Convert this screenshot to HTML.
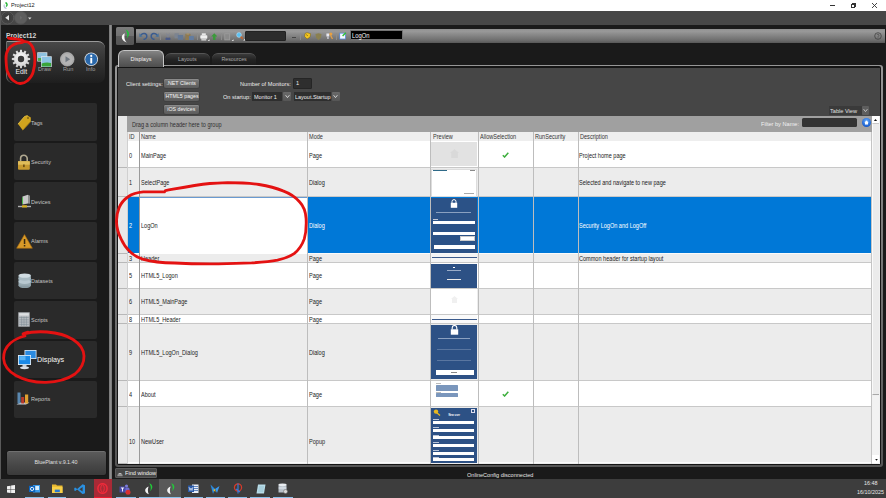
<!DOCTYPE html>
<html><head><meta charset="utf-8"><style>
*{box-sizing:border-box;margin:0;padding:0}
html,body{width:886px;height:498px;overflow:hidden;background:#1a1a1a;font-family:"Liberation Sans",sans-serif;position:relative}
.a{position:absolute}
.t{position:absolute;white-space:nowrap;line-height:1}
.gt{position:absolute;white-space:nowrap;font-size:6.4px;color:#1c1c1c;line-height:1;transform:scaleX(0.87);transform-origin:0 0}
</style></head><body>
<div class="a" style="left:0;top:0;width:886px;height:11px;background:#fff"></div>
<div class="a" style="left:0;top:0;width:1px;height:498px;background:#5a5a5a"></div>
<svg class="a" style="left:3px;top:2px" width="6" height="7" viewBox="0 0 6 7"><path d="M2.5 0.5 C4.5 1.5 4.5 3.5 3 4.5" stroke="#1fb030" stroke-width="1.4" fill="none"/><path d="M1.5 2.5 C0.5 4 1.5 6 3.5 6.5" stroke="#b9c0d8" stroke-width="1.2" fill="none"/></svg>
<div class="t" style="left:11px;top:1.93px;font-size:6.16px;color:#1a1a1a;transform:scaleX(0.91);transform-origin:0 0">Project12</div>
<div class="a" style="left:830px;top:5px;width:5px;height:1px;background:#333"></div>
<div class="a" style="left:852px;top:2.8px;width:4px;height:4px;border:0.8px solid #333"></div><div class="a" style="left:850.6px;top:4px;width:4.2px;height:4.2px;border:0.9px solid #333;background:#fff"></div>
<svg class="a" style="left:871px;top:2px" width="7" height="7" viewBox="0 0 7 7"><path d="M1 1L6 6M6 1L1 6" stroke="#333" stroke-width="0.9"/></svg>
<div class="a" style="left:1px;top:11px;width:885px;height:14px;background:#474747"></div>
<svg class="a" style="left:0;top:11px" width="30" height="14" viewBox="0 0 30 14"><circle cx="7.5" cy="6.8" r="6.2" fill="#3e3e3e" stroke="#5c5c5c" stroke-width="0.9"/><circle cx="20.8" cy="6.8" r="6.2" fill="#5e5e5e" stroke="#585858" stroke-width="0.9"/><circle cx="7.5" cy="6.8" r="4.6" fill="none" stroke="#4a4a4a" stroke-width="0.6"/><path d="M9 4L5.2 6.8L9 9.6Z" fill="#e4e4e4"/><path d="M20 4.8L22.4 6.8L20 8.8Z" fill="#6a6a6a"/></svg>
<svg class="a" style="left:28px;top:16.5px" width="4" height="3"><path d="M0 0.5L3.5 0.5L1.75 2.5Z" fill="#ddd"/></svg>
<div class="t" style="left:5.9px;top:32.5px;font-size:6.75px;font-weight:bold;color:#d4d4d4">Project12</div>
<div class="a" style="left:6px;top:41.2px;width:98.5px;height:42px;border-radius:1px 7px 7px 7px;background:linear-gradient(#484848,#333 45%,#262626 80%,#1e1e1e);border-top:1px solid #9a9a9a;border-left:0.8px solid #6a6a6a"></div>
<svg class="a" style="left:10.8px;top:48.6px" width="20" height="20" viewBox="0 0 20 20"><defs><radialGradient id="gg" cx="50%" cy="40%" r="60%"><stop offset="0" stop-color="#ffffff"/><stop offset="1" stop-color="#c8c8c8"/></radialGradient></defs><path d="M16.90 8.83L19.15 9.08L19.15 10.92L16.90 11.17L16.56 12.44L18.39 13.78L17.47 15.38L15.39 14.46L14.46 15.39L15.38 17.47L13.78 18.39L12.44 16.56L11.17 16.90L10.92 19.15L9.08 19.15L8.83 16.90L7.56 16.56L6.22 18.39L4.62 17.47L5.54 15.39L4.61 14.46L2.53 15.38L1.61 13.78L3.44 12.44L3.10 11.17L0.85 10.92L0.85 9.08L3.10 8.83L3.44 7.56L1.61 6.22L2.53 4.62L4.61 5.54L5.54 4.61L4.62 2.53L6.22 1.61L7.56 3.44L8.83 3.10L9.08 0.85L10.92 0.85L11.17 3.10L12.44 3.44L13.78 1.61L15.38 2.53L14.46 4.61L15.39 5.54L17.47 4.62L18.39 6.22L16.56 7.56Z" fill="url(#gg)"/><circle cx="10" cy="10" r="3.2" fill="#3a3a3a"/></svg>
<div class="t" style="left:15.4px;top:68.5px;font-size:6.8px;color:#f0f0f0">Edit</div>
<svg class="a" style="left:37px;top:51.5px" width="15" height="15.5" viewBox="0 0 15 15.5"><rect x="0.3" y="0.3" width="10" height="9.2" fill="#e8eef2"/><rect x="0.9" y="0.9" width="8.8" height="8" fill="#8ec2e0"/><rect x="0.9" y="6" width="8.8" height="2.9" fill="#4aa848"/><rect x="4.1" y="4.3" width="10.6" height="10.9" fill="#e8eef2"/><rect x="4.7" y="4.9" width="9.4" height="9.7" fill="#8cc4e4"/><path d="M4.7 11.5Q9 10 14.1 11V14.6H4.7Z" fill="#3aa63a"/></svg>
<div class="t" style="left:37.7px;top:65.63px;font-size:6.16px;color:#a0a0a0;transform:scaleX(0.91);transform-origin:0 0">Draw</div>
<svg class="a" style="left:60px;top:52px" width="14.5" height="14.5" viewBox="0 0 14.5 14.5"><circle cx="7.25" cy="7.25" r="6.8" fill="#a8a8a8" stroke="#c8c8c8" stroke-width="0.6"/><circle cx="7.25" cy="7.25" r="5.6" fill="#b4b4b4"/><path d="M5.5 4.2L10.2 7.25L5.5 10.3Z" fill="#707880"/></svg>
<div class="t" style="left:62.6px;top:65.63px;font-size:6.16px;color:#a0a0a0;transform:scaleX(0.91);transform-origin:0 0">Run</div>
<svg class="a" style="left:83.5px;top:52px" width="14.5" height="14.5" viewBox="0 0 14.5 14.5"><circle cx="7.25" cy="7.25" r="6.8" fill="#e0e4e8"/><circle cx="7.25" cy="7.25" r="6" fill="#2a68aa"/><circle cx="7.25" cy="3.9" r="1.1" fill="#fff"/><rect x="6.3" y="5.8" width="1.9" height="5.6" fill="#fff"/></svg>
<div class="t" style="left:85.7px;top:65.63px;font-size:6.16px;color:#a0a0a0;transform:scaleX(0.91);transform-origin:0 0">Info</div>
<div class="a" style="left:14px;top:103.00px;width:83.1px;height:37.6px;border-radius:2px;background:#2a2a2a"></div>
<div class="t" style="left:31.3px;top:119.70px;font-size:6.05px;color:#c4c4c4;transform:scaleX(0.91);transform-origin:0 0">Tags</div>
<div class="a" style="left:14px;top:142.65px;width:83.1px;height:37.6px;border-radius:2px;background:#2a2a2a"></div>
<div class="t" style="left:31.3px;top:159.18px;font-size:6.05px;color:#c4c4c4;transform:scaleX(0.91);transform-origin:0 0">Security</div>
<div class="a" style="left:14px;top:182.30px;width:83.1px;height:37.6px;border-radius:2px;background:#2a2a2a"></div>
<div class="t" style="left:31.3px;top:198.66px;font-size:6.05px;color:#c4c4c4;transform:scaleX(0.91);transform-origin:0 0">Devices</div>
<div class="a" style="left:14px;top:221.95px;width:83.1px;height:37.6px;border-radius:2px;background:#2a2a2a"></div>
<div class="t" style="left:31.3px;top:238.14px;font-size:6.05px;color:#c4c4c4;transform:scaleX(0.91);transform-origin:0 0">Alarms</div>
<div class="a" style="left:14px;top:261.60px;width:83.1px;height:37.6px;border-radius:2px;background:#2a2a2a"></div>
<div class="t" style="left:31.3px;top:277.62px;font-size:6.05px;color:#c4c4c4;transform:scaleX(0.91);transform-origin:0 0">Datasets</div>
<div class="a" style="left:14px;top:301.25px;width:83.1px;height:37.6px;border-radius:2px;background:#2a2a2a"></div>
<div class="t" style="left:31.3px;top:317.10px;font-size:6.05px;color:#c4c4c4;transform:scaleX(0.91);transform-origin:0 0">Scripts</div>
<div class="a" style="left:14px;top:340.90px;width:83.1px;height:37.6px;border-radius:2px;background:#2a2a2a"></div>
<div class="t" style="left:37px;top:356.4px;font-size:7.2px;color:#f4f4f4">Displays</div>
<div class="a" style="left:14px;top:380.55px;width:83.1px;height:37.6px;border-radius:2px;background:#2a2a2a"></div>
<div class="t" style="left:31.3px;top:396.06px;font-size:6.05px;color:#c4c4c4;transform:scaleX(0.91);transform-origin:0 0">Reports</div>
<svg class="a" style="left:17px;top:113px" width="15" height="18" viewBox="0 0 15 18"><path d="M1 11.1L7.5 3.5L10.5 2.5L13.8 4.4L13.8 8.4L5.8 17.2Z" fill="#d0a41e"/><path d="M1 11.1L7.5 3.5L10.5 2.5" stroke="#e8c448" stroke-width="0.8" fill="none"/><path d="M5.8 17.2L13.8 8.4" stroke="#a07810" stroke-width="0.8"/><circle cx="11" cy="5" r="0.8" fill="#4a3a10"/></svg>
<svg class="a" style="left:17px;top:153.5px" width="14" height="16.5" viewBox="0 0 14 16.5"><path d="M3.6 7.5V4.6A3.3 3.3 0 0 1 10.2 4.6V7.5" stroke="#b0a890" stroke-width="1.6" fill="none"/><rect x="1" y="7.2" width="11.8" height="8.6" rx="1" fill="#c79a30"/><rect x="1" y="7.2" width="11.8" height="3.5" fill="#e0bd5a"/><rect x="6.2" y="10.5" width="1.4" height="2.6" fill="#5a4010"/></svg>
<svg class="a" style="left:16.5px;top:193.5px" width="15" height="15" viewBox="0 0 15 15"><path d="M5.5 2.5L11 0.8V9.5L5.5 10.5Z" fill="#c8c8c8"/><path d="M11 0.8L13 1.8V9.8L11 9.5Z" fill="#8c8c8c"/><path d="M5.5 3.5V10" stroke="#4bb84b" stroke-width="1"/><rect x="1" y="11.8" width="13" height="1.4" fill="#b0b0b0"/><rect x="5" y="11.2" width="5" height="2.4" rx="0.5" fill="#d8b020"/></svg>
<svg class="a" style="left:15.5px;top:233.5px" width="17" height="15" viewBox="0 0 17 15"><path d="M8.5 0.6L16.4 14.2H0.6Z" fill="#d89a28" stroke="#a86c10" stroke-width="0.6"/><rect x="7.8" y="5" width="1.5" height="5" fill="#3a2a10"/><rect x="7.8" y="11" width="1.5" height="1.5" fill="#3a2a10"/></svg>
<svg class="a" style="left:17.5px;top:272.5px" width="13.5" height="15.5" viewBox="0 0 13.5 15.5"><ellipse cx="6.7" cy="12.6" rx="6.2" ry="2.6" fill="#8a9ca4"/><rect x="0.5" y="2.6" width="12.4" height="10" fill="#98aab2"/><ellipse cx="6.7" cy="8.6" rx="6.2" ry="2.3" fill="#b8c8d0"/><ellipse cx="6.7" cy="5.4" rx="6.2" ry="2.3" fill="#a8bac2"/><ellipse cx="6.7" cy="2.6" rx="6.2" ry="2.2" fill="#d0dce2"/></svg>
<svg class="a" style="left:18px;top:312.3px" width="12" height="15" viewBox="0 0 12 15"><rect x="0.3" y="0.3" width="11.4" height="14.4" fill="#b8bcc0"/><rect x="1.2" y="1.2" width="9.6" height="2.4" fill="#dde0e2"/><path d="M1.2 5.5H10.8M1.2 7.8H10.8M1.2 10.1H10.8M1.2 12.4H10.8M3.6 4.5V14M6 4.5V14M8.4 4.5V14" stroke="#7a8890" stroke-width="0.5"/></svg>
<svg class="a" style="left:16.5px;top:348.5px" width="21" height="21" viewBox="0 0 21 21"><rect x="7.5" y="1" width="12" height="9" fill="#dfe8f0"/><rect x="8.3" y="1.8" width="10.4" height="7.4" fill="#2a8ae0"/><rect x="1" y="6" width="13" height="10" fill="#eef2f6"/><rect x="1.8" y="6.8" width="11.4" height="8.4" fill="#1a8ae8"/><rect x="2.5" y="7.2" width="6" height="4" fill="#5ab4f4"/><rect x="5.5" y="16" width="4" height="2" fill="#c8d0d8"/><ellipse cx="7.5" cy="18.8" rx="4.5" ry="1.4" fill="#d8e0e8"/></svg>
<svg class="a" style="left:16.3px;top:390.8px" width="14" height="15.5" viewBox="0 0 14 15.5"><path d="M0.5 13.5L4 11.5H13.5L10 13.5Z" fill="#c8d0d8"/><rect x="1.5" y="1.5" width="3" height="11" fill="#5a88b0"/><rect x="5.2" y="6" width="3" height="6.5" fill="#b83a2a"/><rect x="9" y="3.5" width="3.2" height="9" fill="#e0a030"/></svg>
<div class="a" style="left:6px;top:449.6px;width:100.5px;height:26.4px;border-radius:3px;background:linear-gradient(#5c5c5c,#4a4a4a 50%,#3a3a3a);border:1px solid #161616;box-shadow:inset 0 1px 0 #707070"></div>
<div class="t" style="left:-0.4px;top:460.35px;width:112px;text-align:center;font-size:5.88px;color:#e0e0e0;transform:scaleX(0.91);transform-origin:50% 0">BluePlant v.9.1.40</div>
<div class="a" style="left:109px;top:25px;width:3px;height:454px;background:linear-gradient(90deg,#747474,#8e8e8e,#747474)"></div>
<div class="a" style="left:115px;top:64.8px;width:767.9px;height:401.9px;border-radius:3px;background:linear-gradient(#969696,#767676 50%,#555)"></div>
<div class="a" style="left:116.5px;top:66.2px;width:764.9px;height:399px;border-radius:2px;background:#151515"></div>
<div class="a" style="left:118px;top:67.8px;width:762px;height:396px;background:#464646"></div>
<div class="a" style="left:116px;top:27.4px;width:17.6px;height:17.2px;border-radius:1.5px;background:linear-gradient(#7c7c7c 0,#727272 50%,#5c5c5c 50%,#545454 100%)"></div>
<svg class="a" style="left:120.5px;top:29.3px" width="10" height="14" viewBox="0 0 10 14"><path d="M4.6 0.5C8.6 2 9.2 6.2 5.6 9.6C6.8 6.6 6.6 3.4 4.6 0.5Z" fill="#1ec03a"/><path d="M3.8 4.2C-0.6 6.4 -0.4 11 5.8 13.6C3.2 11 3 7.4 3.8 4.2Z" fill="#fafafa"/></svg>
<div class="a" style="left:136px;top:29px;width:749px;height:14px;background:linear-gradient(#8e8e8e,#9a9a9a 15%,#6e6e6e 80%,#585858)"></div>
<svg class="a" style="left:138.5px;top:32px" width="9" height="8" viewBox="0 0 9 8"><path d="M2 3.2C3.5 0.8 7.5 1 7.8 4C8 6.2 6 7.5 4.5 7.3" stroke="#3a5c90" stroke-width="1.5" fill="none"/><path d="M0.4 1.2L3.6 4.6L0.4 5Z" fill="#44709e"/></svg><svg class="a" style="left:149.8px;top:32px" width="9" height="8" viewBox="0 0 9 8"><path d="M7 3.2C5.5 0.8 1.5 1 1.2 4C1 6.2 3 7.5 4.5 7.3" stroke="#3a5c90" stroke-width="1.5" fill="none"/><path d="M8.6 1.2L5.4 4.6L8.6 5Z" fill="#44709e"/></svg><div class="a" style="left:160.4px;top:32.8px;width:0.8px;height:7.5px;background:#8c8c8c"></div><div class="a" style="left:196.6px;top:32.8px;width:0.8px;height:7.5px;background:#8c8c8c"></div><div class="a" style="left:220.5px;top:32.8px;width:0.8px;height:7.5px;background:#8c8c8c"></div><div class="a" style="left:300.4px;top:32.8px;width:0.8px;height:7.5px;background:#8c8c8c"></div><div class="a" style="left:336.3px;top:32.8px;width:0.8px;height:7.5px;background:#8c8c8c"></div><svg class="a" style="left:164.8px;top:32.5px" width="6" height="7.5" viewBox="0 0 6 7.5"><path d="M1.5 0.5L3 4M4.5 0.5L3 4" stroke="#7a84a0" stroke-width="0.6"/><circle cx="1.8" cy="5.8" r="1.4" fill="#4a5a88"/><circle cx="4.2" cy="5.8" r="1.4" fill="#4a5a88"/></svg><svg class="a" style="left:174px;top:33px" width="9.5" height="7" viewBox="0 0 9.5 7"><rect x="0.5" y="0.3" width="4.5" height="5" fill="#7c8490"/><rect x="3.8" y="2" width="5.2" height="4.8" fill="#647894"/></svg><svg class="a" style="left:185.4px;top:32.6px" width="9" height="7.5" viewBox="0 0 9 7.5"><rect x="0.3" y="0.8" width="5.2" height="6.5" fill="#8e7a52"/><rect x="1.5" y="0.3" width="2.8" height="1.3" fill="#a89470"/><rect x="4" y="3" width="4.8" height="4.3" fill="#627ca0"/></svg><svg class="a" style="left:199.5px;top:32.5px" width="10" height="8.5" viewBox="0 0 10 8.5"><rect x="1.8" y="0.3" width="4" height="2" fill="#e8e8e8"/><rect x="0.3" y="2.2" width="7" height="3.6" rx="0.8" fill="#f0f0f0"/><rect x="1.3" y="5.6" width="5" height="2" fill="#c8c8c8"/><path d="M9.5 6.2V8.4H7.3Z" fill="#f4f4f4"/></svg><svg class="a" style="left:210.8px;top:32.5px" width="6.5" height="7.5" viewBox="0 0 6.5 7.5"><path d="M3.25 0.2L6.3 3.4H4.5V7.3H2V3.4H0.2Z" fill="#3a9a3a"/></svg><svg class="a" style="left:223.8px;top:32.5px" width="10" height="8.5" viewBox="0 0 10 8.5"><rect x="0.3" y="0.3" width="5.8" height="7" fill="#9a9a9a"/><rect x="1.2" y="1.2" width="4" height="5.2" fill="#8a8a8a"/><path d="M9.5 6.2V8.4H7.3Z" fill="#f4f4f4"/></svg><svg class="a" style="left:235.5px;top:32.3px" width="9.5" height="8.6" viewBox="0 0 9.5 8.6"><circle cx="3" cy="3" r="2.4" fill="#5ac0f0" stroke="#c8e8ff" stroke-width="0.5"/><path d="M4.6 4.6L6.8 6.8" stroke="#d06020" stroke-width="1.3"/><path d="M9.3 6.4V8.5H7.2Z" fill="#f4f4f4"/></svg><div class="a" style="left:244.8px;top:31px;width:41.4px;height:9.6px;border-radius:1px;background:#2c2c2c;border:0.5px solid #222"></div><div class="a" style="left:291.8px;top:37.4px;width:4.2px;height:0.8px;background:#444"></div><svg class="a" style="left:303.8px;top:32.4px" width="7.5" height="7.5" viewBox="0 0 7.5 7.5"><path d="M1 1.5L3 0.6L6.8 1.8L6 5.2L3 7L0.6 4.5Z" fill="#f2c420" stroke="#5a4a10" stroke-width="0.4"/><path d="M2 2.5L4 3.8" stroke="#5a4a10" stroke-width="0.5"/></svg><svg class="a" style="left:315px;top:32.5px" width="7" height="7.5" viewBox="0 0 7 7.5"><path d="M0.5 1L3.5 0.3L6.5 1L6 4.5L3.5 7.2L1 4.5Z" fill="#8a8050"/></svg><svg class="a" style="left:325.6px;top:32.4px" width="7.5" height="7.5" viewBox="0 0 7.5 7.5"><circle cx="4.8" cy="2" r="1.6" fill="#e8a040"/><path d="M4.5 3.2L6.5 7" stroke="#e8a040" stroke-width="1.2"/><rect x="0.4" y="1.5" width="2.8" height="3" fill="#e8e8f0"/><rect x="1.2" y="4.5" width="1.5" height="2.5" fill="#c8c8d0"/></svg><svg class="a" style="left:339px;top:32.3px" width="7.5" height="7.6" viewBox="0 0 7.5 7.6"><rect x="0.3" y="0.8" width="6.6" height="6.6" fill="#5a8ad8"/><rect x="1.1" y="1.6" width="5" height="5" fill="#f4f8ff"/><path d="M3.6 4L6.8 0.8" stroke="#2ac030" stroke-width="1.4"/></svg><div class="a" style="left:350.2px;top:30.3px;width:52.4px;height:10px;border-radius:1px;background:#000;border:0.9px solid #727272"></div><div class="t" style="left:352.2px;top:32.71px;font-size:6.38px;color:#f4f4f4;transform:scaleX(0.91);transform-origin:0 0">LogOn</div><svg class="a" style="left:873.5px;top:31.6px" width="8" height="8" viewBox="0 0 8 8"><circle cx="4" cy="4" r="3.3" fill="none" stroke="#3a3a3a" stroke-width="0.7"/><path d="M3 3C3 2 5 2 5 3.2C5 4 4 4 4 4.8" stroke="#3a3a3a" stroke-width="0.6" fill="none"/><circle cx="4" cy="5.8" r="0.4" fill="#3a3a3a"/></svg>
<div class="a" style="left:118px;top:50px;width:46px;height:16.5px;border:1px solid #c4c4c4;border-bottom:none;border-radius:6px 6px 0 0;background:linear-gradient(#848484,#646464 50%,#4e4e4e)"></div>
<div class="t" style="left:118px;top:56.23px;width:46px;text-align:center;font-size:6.05px;color:#f4f4f4;transform:scaleX(0.91);transform-origin:50% 0">Displays</div>
<div class="a" style="left:165px;top:53px;width:44.6px;height:12px;border-radius:6px 6px 0 0;background:linear-gradient(#3a3a3a,#242424 50%,#1c1c1c);border-top:1px solid #555"></div>
<div class="t" style="left:165px;top:56.55px;width:44.6px;text-align:center;font-size:5.83px;color:#a8a8a8;transform:scaleX(0.91);transform-origin:50% 0">Layouts</div>
<div class="a" style="left:212px;top:53px;width:44.2px;height:12px;border-radius:6px 6px 0 0;background:linear-gradient(#3a3a3a,#242424 50%,#1c1c1c);border-top:1px solid #555"></div>
<div class="t" style="left:212px;top:56.55px;width:44.2px;text-align:center;font-size:5.83px;color:#a8a8a8;transform:scaleX(0.91);transform-origin:50% 0">Resources</div>
<div class="t" style="left:126px;top:81.03px;font-size:6.16px;color:#ececec;transform:scaleX(0.91);transform-origin:0 0">Client settings:</div>
<div class="a" style="left:164.2px;top:79px;width:34.6px;height:9px;border-radius:2px;background:linear-gradient(#7c7c7c,#666 60%,#5c5c5c);box-shadow:0 0 0 0.6px #3a3a3a,inset 0 0.6px 0 #9a9a9a"></div>
<div class="t" style="left:164.2px;top:80.76px;width:34.6px;text-align:center;font-size:5.78px;color:#f4f4f4;transform:scaleX(0.91);transform-origin:50% 0">.NET Clients</div>
<div class="a" style="left:164.2px;top:92px;width:34.6px;height:9px;border-radius:2px;background:linear-gradient(#7c7c7c,#666 60%,#5c5c5c);box-shadow:0 0 0 0.6px #3a3a3a,inset 0 0.6px 0 #9a9a9a"></div>
<div class="t" style="left:164.2px;top:93.76px;width:34.6px;text-align:center;font-size:5.78px;color:#f4f4f4;transform:scaleX(0.91);transform-origin:50% 0">HTML5 pages</div>
<div class="a" style="left:164.2px;top:105px;width:34.6px;height:9px;border-radius:2px;background:linear-gradient(#7c7c7c,#666 60%,#5c5c5c);box-shadow:0 0 0 0.6px #3a3a3a,inset 0 0.6px 0 #9a9a9a"></div>
<div class="t" style="left:164.2px;top:106.76px;width:34.6px;text-align:center;font-size:5.78px;color:#f4f4f4;transform:scaleX(0.91);transform-origin:50% 0">iOS devices</div>
<div class="t" style="left:239.7px;top:80.63px;font-size:6.16px;color:#ececec;transform:scaleX(0.91);transform-origin:0 0">Number of Monitors:</div>
<div class="a" style="left:293px;top:78px;width:18.6px;height:10.6px;border-radius:1px;background:#2e2e2e;border:1px solid #252525"></div>
<div class="t" style="left:295.5px;top:80.03px;font-size:6.16px;color:#eee;transform:scaleX(0.91);transform-origin:0 0">1</div>
<div class="t" style="left:222.8px;top:93.73px;font-size:6.16px;color:#ececec;transform:scaleX(0.91);transform-origin:0 0">On startup:</div>
<div class="a" style="left:252.4px;top:92px;width:30px;height:8.8px;background:#2e2e2e"></div>
<div class="t" style="left:253.6px;top:93.54px;font-size:6.00px;color:#eee;transform:scaleX(0.91);transform-origin:0 0">Monitor 1</div>
<div class="a" style="left:283.2px;top:92px;width:7.8px;height:8.8px;border-radius:1px;background:linear-gradient(#6a6a6a,#555)"></div>
<svg class="a" style="left:284.59999999999997px;top:94px" width="5" height="5" viewBox="0 0 5 5"><path d="M0.6 1.2L2.5 3.6L4.4 1.2" stroke="#ddd" stroke-width="0.9" fill="none"/></svg>
<div class="a" style="left:294px;top:92px;width:36.6px;height:8.8px;background:#2e2e2e"></div>
<div class="t" style="left:295.2px;top:93.54px;font-size:6.00px;color:#eee;transform:scaleX(0.91);transform-origin:0 0">Layout.Startup</div>
<div class="a" style="left:331.8px;top:92px;width:7.8px;height:8.8px;border-radius:1px;background:linear-gradient(#6a6a6a,#555)"></div>
<svg class="a" style="left:333.2px;top:94px" width="5" height="5" viewBox="0 0 5 5"><path d="M0.6 1.2L2.5 3.6L4.4 1.2" stroke="#ddd" stroke-width="0.9" fill="none"/></svg>
<div class="a" style="left:829px;top:105.7px;width:32.7px;height:9.3px;background:#3a3a3a"></div>
<div class="t" style="left:830px;top:108.23px;font-size:6.16px;color:#e0e0e0;transform:scaleX(0.91);transform-origin:0 0">Table View</div>
<div class="a" style="left:862.1px;top:105.7px;width:7.4px;height:9.3px;border-radius:1px;background:#5e5e5e"></div>
<svg class="a" style="left:863.3px;top:108px" width="5" height="5" viewBox="0 0 5 5"><path d="M0.6 1.2L2.5 3.6L4.4 1.2" stroke="#ccc" stroke-width="0.9" fill="none"/></svg>
<div class="a" style="left:118px;top:116px;width:762px;height:347.5px;background:#ececec"></div>
<div class="a" style="left:118px;top:116px;width:9.3px;height:347.5px;background:#e8e8e8"></div>
<div class="a" style="left:127px;top:116px;width:745px;height:15.5px;background:#a0a0a0"></div>
<div class="gt" style="left:131.5px;top:122.2px;color:#303030">Drag a column header here to group</div>
<div class="t" style="left:761px;top:120.73px;font-size:6.16px;color:#f0f0f0;transform:scaleX(0.91);transform-origin:0 0">Filter by Name:</div>
<div class="a" style="left:801.5px;top:118.2px;width:55.5px;height:8.8px;border-radius:1.5px;background:#333"></div>
<div class="a" style="left:861.5px;top:118.3px;width:9px;height:9px;border-radius:50%;background:radial-gradient(circle at 50% 35%,#6ab0ff,#1a5fd0 70%,#0d3f9a)"></div>
<svg class="a" style="left:863.5px;top:120px" width="5" height="5" viewBox="0 0 5 5"><path d="M2.5 0.4L4.6 2.4H4V4.5H1V2.4H0.4Z" fill="#fff"/></svg>
<div class="a" style="left:127px;top:131.5px;width:745px;height:10px;background:#eeeeee;border-bottom:1px solid #c8c8c8"></div>
<div class="gt" style="left:128.8px;top:134.1px;color:#333">ID</div>
<div class="gt" style="left:141.2px;top:134.1px;color:#333">Name</div>
<div class="gt" style="left:309.3px;top:134.1px;color:#333">Mode</div>
<div class="gt" style="left:432.5px;top:134.1px;color:#333">Preview</div>
<div class="gt" style="left:480.3px;top:134.1px;color:#333">AllowSelection</div>
<div class="gt" style="left:535.2px;top:134.1px;color:#333">RunSecurity</div>
<div class="gt" style="left:579.8px;top:134.1px;color:#333">Description</div>
<div class="a" style="left:127px;top:141.3px;width:745px;height:26.8px;background:#ffffff;border-bottom:1px solid #c8c8c8"></div>
<div class="gt" style="left:128.8px;top:152.6px;color:#222">0</div>
<div class="gt" style="left:141.3px;top:152.6px">MainPage</div>
<div class="gt" style="left:308.9px;top:152.6px;color:#222">Page</div>
<div class="gt" style="left:579px;top:152.6px;color:#222">Project home page</div>
<svg class="a" style="left:502px;top:151.7px" width="7" height="6" viewBox="0 0 7 6"><path d="M0.8 3.2L2.6 5L6.3 0.8" stroke="#3cae3c" stroke-width="1.5" fill="none"/></svg>
<div class="a" style="left:118px;top:167.1px;width:9.3px;height:1px;background:#b8b8b8"></div>
<div class="a" style="left:127px;top:168.1px;width:745px;height:29.2px;background:#ececec;border-bottom:1px solid #c8c8c8"></div>
<div class="gt" style="left:128.8px;top:180.2px;color:#222">1</div>
<div class="gt" style="left:141.3px;top:180.2px">SelectPage</div>
<div class="gt" style="left:308.9px;top:180.2px;color:#222">Dialog</div>
<div class="gt" style="left:579px;top:180.2px;color:#222">Selected and navigate to new page</div>
<div class="a" style="left:118px;top:196.3px;width:9.3px;height:1px;background:#b8b8b8"></div>
<div class="a" style="left:127px;top:197.3px;width:745px;height:56.7px;background:#0078d7;border-bottom:1px solid #fafafa"></div>
<div class="a" style="left:139.4px;top:197.3px;width:168px;height:56.7px;background:#fff;border-top:1px solid #6a9ad0"></div>
<div class="gt" style="left:128.8px;top:223.2px;color:#fff">2</div>
<div class="gt" style="left:141.3px;top:223.2px">LogOn</div>
<div class="gt" style="left:308.9px;top:223.2px;color:#fff">Dialog</div>
<div class="gt" style="left:579px;top:223.2px;color:#fff">Security LogOn and LogOff</div>
<div class="a" style="left:118px;top:253.0px;width:9.3px;height:1px;background:#b8b8b8"></div>
<div class="a" style="left:127px;top:254.0px;width:745px;height:9.0px;background:#ececec;border-bottom:1px solid #c8c8c8"></div>
<div class="gt" style="left:128.8px;top:256.0px;color:#222">3</div>
<div class="gt" style="left:141.3px;top:256.0px">Header</div>
<div class="gt" style="left:308.9px;top:256.0px;color:#222">Page</div>
<div class="gt" style="left:579px;top:256.0px;color:#222">Common header for startup layout</div>
<div class="a" style="left:118px;top:262.0px;width:9.3px;height:1px;background:#b8b8b8"></div>
<div class="a" style="left:127px;top:263.0px;width:745px;height:25.8px;background:#ffffff;border-bottom:1px solid #c8c8c8"></div>
<div class="gt" style="left:128.8px;top:273.4px;color:#222">5</div>
<div class="gt" style="left:141.3px;top:273.4px">HTML5_Logon</div>
<div class="gt" style="left:308.9px;top:273.4px;color:#222">Page</div>
<div class="a" style="left:118px;top:287.8px;width:9.3px;height:1px;background:#b8b8b8"></div>
<div class="a" style="left:127px;top:288.8px;width:745px;height:26.0px;background:#ececec;border-bottom:1px solid #c8c8c8"></div>
<div class="gt" style="left:128.8px;top:299.3px;color:#222">6</div>
<div class="gt" style="left:141.3px;top:299.3px">HTML5_MainPage</div>
<div class="gt" style="left:308.9px;top:299.3px;color:#222">Page</div>
<div class="a" style="left:118px;top:313.8px;width:9.3px;height:1px;background:#b8b8b8"></div>
<div class="a" style="left:127px;top:314.8px;width:745px;height:9.5px;background:#ffffff;border-bottom:1px solid #c8c8c8"></div>
<div class="gt" style="left:128.8px;top:317.1px;color:#222">8</div>
<div class="gt" style="left:141.3px;top:317.1px">HTML5_Header</div>
<div class="gt" style="left:308.9px;top:317.1px;color:#222">Page</div>
<div class="a" style="left:118px;top:323.3px;width:9.3px;height:1px;background:#b8b8b8"></div>
<div class="a" style="left:127px;top:324.3px;width:745px;height:56.7px;background:#ececec;border-bottom:1px solid #c8c8c8"></div>
<div class="gt" style="left:128.8px;top:350.1px;color:#222">9</div>
<div class="gt" style="left:141.3px;top:350.1px">HTML5_LogOn_Dialog</div>
<div class="gt" style="left:308.9px;top:350.1px;color:#222">Dialog</div>
<div class="a" style="left:118px;top:380.0px;width:9.3px;height:1px;background:#b8b8b8"></div>
<div class="a" style="left:127px;top:381.0px;width:745px;height:26.3px;background:#ffffff;border-bottom:1px solid #c8c8c8"></div>
<div class="gt" style="left:128.8px;top:391.6px;color:#222">4</div>
<div class="gt" style="left:141.3px;top:391.6px">About</div>
<div class="gt" style="left:308.9px;top:391.6px;color:#222">Page</div>
<svg class="a" style="left:502px;top:391.1px" width="7" height="6" viewBox="0 0 7 6"><path d="M0.8 3.2L2.6 5L6.3 0.8" stroke="#3cae3c" stroke-width="1.5" fill="none"/></svg>
<div class="a" style="left:118px;top:406.3px;width:9.3px;height:1px;background:#b8b8b8"></div>
<div class="a" style="left:127px;top:407.3px;width:745px;height:56.2px;background:#ececec;border-bottom:1px solid #fafafa"></div>
<div class="gt" style="left:128.8px;top:439.4px;color:#222">10</div>
<div class="gt" style="left:141.3px;top:439.4px">NewUser</div>
<div class="gt" style="left:308.9px;top:439.4px;color:#222">Popup</div>
<div class="a" style="left:118px;top:462.5px;width:9.3px;height:1px;background:#b8b8b8"></div>
<div class="a" style="left:138.9px;top:131.5px;width:1.6px;height:332.0px;background:#9a9a9a"></div>
<div class="a" style="left:307.0px;top:131.5px;width:1px;height:332.0px;background:#bdbdbd"></div>
<div class="a" style="left:430.2px;top:131.5px;width:1px;height:332.0px;background:#bdbdbd"></div>
<div class="a" style="left:478.0px;top:131.5px;width:1px;height:332.0px;background:#bdbdbd"></div>
<div class="a" style="left:532.9px;top:131.5px;width:1px;height:332.0px;background:#bdbdbd"></div>
<div class="a" style="left:577.5px;top:131.5px;width:1px;height:332.0px;background:#bdbdbd"></div>
<div class="a" style="left:126.8px;top:131.5px;width:1px;height:332.0px;background:#d0d0d0"></div>
<div class="a" style="left:871.3px;top:131.5px;width:0.8px;height:332.0px;background:#c4c4c4"></div>
<div class="a" style="left:872px;top:116px;width:8px;height:347.5px;background:#f0f0f0"></div>
<div class="a" style="left:872px;top:116.4px;width:7.4px;height:6.9px;background:#fff"></div>
<div class="a" style="left:872px;top:123.3px;width:7.4px;height:272px;background:#ebebeb;border-top:0.7px solid #c8c8c8;border-bottom:1.2px solid #a8a8a8;border-left:0.8px solid #fafafa"></div>
<div class="a" style="left:872px;top:395.5px;width:7.4px;height:60px;background:#f2f2f2"></div>
<svg class="a" style="left:873.2px;top:118px" width="5" height="4" viewBox="0 0 5 4"><path d="M0.9 2.9L2.5 1L4.1 2.9Z" fill="#111"/></svg>
<div class="a" style="left:872px;top:455px;width:7.4px;height:8px;background:#fff"></div>
<svg class="a" style="left:873.5px;top:457.6px" width="5" height="4" viewBox="0 0 5 4"><path d="M1.2 1L2.5 2.8L3.8 1Z" fill="#111"/></svg>
<div class="a" style="left:431.2px;top:142.4px;width:46.2px;height:23.6px;overflow:hidden"><div class="a" style="left:0;top:0;width:46.2px;height:23.6px;background:#e2e2e2"></div><svg class="a" style="left:18px;top:6px" width="11" height="11" viewBox="0 0 11 11"><path d="M5.5 1L10 5H8.8V10H2.2V5H1Z" fill="#d9d9d9"/></svg></div>
<div class="a" style="left:431.2px;top:168.5px;width:46.2px;height:28px;overflow:hidden"><div class="a" style="left:0;top:0;width:46.2px;height:28px;background:#fff;border:1px solid #ddd"></div><div class="a" style="left:2px;top:1px;width:14px;height:1.6px;background:#2f6a88"></div><div class="a" style="left:39px;top:1px;width:5px;height:1.6px;background:#8a8a8a"></div><div class="a" style="left:33px;top:24.5px;width:10px;height:0.8px;background:#aaa"></div></div>
<div class="a" style="left:431.2px;top:197.7px;width:46.2px;height:55px;overflow:hidden"><div class="a" style="left:0;top:0;width:46.2px;height:55px;background:#2b5287"></div><svg class="a" style="left:19px;top:1.8px" width="8" height="9" viewBox="0 0 8 9"><path d="M2 4V2.6A2 2 0 0 1 6 2.6V4" stroke="#fff" stroke-width="1" fill="none"/><rect x="0.8" y="3.8" width="6.4" height="5" fill="#fff"/></svg><div class="a" style="left:5px;top:14.5px;width:35px;height:0.8px;background:#8aa0c0"></div><div class="a" style="left:2px;top:21.8px;width:5px;height:0.6px;background:#c0c8d8"></div><div class="a" style="left:2px;top:23.2px;width:41.5px;height:3px;background:#fff"></div><div class="a" style="left:2px;top:34px;width:41.5px;height:3px;background:#fff"></div><div class="a" style="left:29px;top:38.6px;width:14.5px;height:4.5px;background:#fff;border:0.5px solid #ccc"></div><div class="a" style="left:2.5px;top:47px;width:41px;height:4.5px;background:#fff"></div></div>
<div class="a" style="left:431.2px;top:254.2px;width:46.2px;height:7.8px;overflow:hidden"><div class="a" style="left:0;top:0;width:46.2px;height:7.8px;background:#f4f4f4"></div><div class="a" style="left:0.5px;top:3.2px;width:45.2px;height:1.1px;background:#3a5a8c"></div></div>
<div class="a" style="left:431.2px;top:264px;width:46.2px;height:23.5px;overflow:hidden"><div class="a" style="left:0;top:0;width:46.2px;height:23.5px;background:#2d5185"></div><div class="a" style="left:22px;top:2.5px;width:2px;height:1.5px;background:#fff"></div><div class="a" style="left:16px;top:5.5px;width:14px;height:0.8px;background:#9aacc8"></div><div class="a" style="left:15.5px;top:14.5px;width:14.5px;height:1.4px;background:#e8e8e8"></div></div>
<div class="a" style="left:431.2px;top:289px;width:46.2px;height:24.8px;overflow:hidden"><div class="a" style="left:0;top:0;width:46.2px;height:24.8px;background:#fff"></div><svg class="a" style="left:19px;top:6px" width="9" height="9" viewBox="0 0 9 9"><path d="M4.5 1L8 4H7V8H2V4H1Z" fill="#f0f0f0"/></svg></div>
<div class="a" style="left:431.2px;top:315.2px;width:46.2px;height:7.6px;overflow:hidden"><div class="a" style="left:0;top:0;width:46.2px;height:7.6px;background:#fafafa"></div><div class="a" style="left:0.5px;top:3.8px;width:45.2px;height:1.1px;background:#3a5a8c"></div></div>
<div class="a" style="left:431.2px;top:325.3px;width:46.2px;height:53.8px;overflow:hidden"><div class="a" style="left:0;top:0;width:46.2px;height:53.8px;background:#2d5185"></div><svg class="a" style="left:18.5px;top:0.2px" width="9" height="10" viewBox="0 0 9 10"><path d="M2.2 4.5V2.8A2.3 2.3 0 0 1 6.8 2.8V4.5" stroke="#fff" stroke-width="1.1" fill="none"/><rect x="0.8" y="4.3" width="7.4" height="5.4" fill="#fff"/></svg><div class="a" style="left:7px;top:12.5px;width:32px;height:0.8px;background:#8aa0c0"></div><div class="a" style="left:6px;top:24px;width:34px;height:0.5px;background:#5a76a0"></div><div class="a" style="left:6px;top:34.5px;width:34px;height:0.5px;background:#5a76a0"></div><div class="a" style="left:4.4px;top:44.5px;width:38px;height:4.8px;background:#fff"></div><div class="a" style="left:20px;top:46.5px;width:6px;height:0.6px;background:#888"></div></div>
<div class="a" style="left:431.2px;top:381.2px;width:46.2px;height:25px;overflow:hidden"><div class="a" style="left:0;top:0;width:46.2px;height:25px;background:#fff"></div><div class="a" style="left:4.8px;top:1.5px;width:5px;height:0.6px;background:#bbb"></div><div class="a" style="left:4.8px;top:3.7px;width:21.8px;height:6.3px;background:#7a96bc;border-radius:0.5px"></div><div class="a" style="left:4.8px;top:10.6px;width:5px;height:0.6px;background:#bbb"></div><div class="a" style="left:4.8px;top:11.9px;width:21.8px;height:3.8px;background:#7a96bc;border-radius:0.5px"></div></div>
<div class="a" style="left:431.2px;top:407.8px;width:46.2px;height:55.2px;overflow:hidden"><div class="a" style="left:0;top:0;width:46.2px;height:55.2px;background:#2d5185"></div><svg class="a" style="left:1.5px;top:1px" width="8" height="7" viewBox="0 0 8 7"><circle cx="3" cy="2.6" r="2.2" fill="#e8b820"/><path d="M3.5 3.5L7 6.5" stroke="#e8b820" stroke-width="1.3"/></svg><div class="t" style="left:0;top:7.2px;width:46.2px;text-align:center;font-size:2.6px;color:#fff;font-weight:bold">New user</div><div class="a" style="left:39.5px;top:1.5px;width:4px;height:3.5px;border:0.6px solid #dde"></div><div class="a" style="left:2px;top:11.3px;width:6px;height:0.6px;background:#b8c4d8"></div><div class="a" style="left:1.8px;top:12.9px;width:41.2px;height:3.1px;background:#fff"></div><div class="a" style="left:2px;top:19.5px;width:6px;height:0.6px;background:#b8c4d8"></div><div class="a" style="left:1.8px;top:21.1px;width:41.2px;height:3.1px;background:#fff"></div><div class="a" style="left:2px;top:26.9px;width:6px;height:0.6px;background:#b8c4d8"></div><div class="a" style="left:1.8px;top:28.5px;width:41.2px;height:3.1px;background:#fff"></div><div class="a" style="left:2px;top:34.6px;width:6px;height:0.6px;background:#b8c4d8"></div><div class="a" style="left:1.8px;top:36.2px;width:41.2px;height:3.1px;background:#fff"></div><div class="a" style="left:2px;top:42.2px;width:6px;height:0.6px;background:#b8c4d8"></div><div class="a" style="left:1.8px;top:43.8px;width:41.2px;height:3.1px;background:#fff"></div><div class="a" style="left:2px;top:48.8px;width:6px;height:0.6px;background:#b8c4d8"></div><div class="a" style="left:1.8px;top:50.4px;width:41.2px;height:3.1px;background:#fff"></div></div>
<svg class="a" style="left:0;top:0" width="886" height="498" viewBox="0 0 886 498"><path d="M8.4 38.2C13 38.6 18 39 22 40.2C24.5 41 24.5 42 21.7 42.6C16.5 42.8 11 45.5 8.4 49.3C6.2 52.5 5.8 56 6 58.9C6.2 64 6.5 68 7.2 70.9C9 76.5 12 79.5 13.2 80.5C15.5 82.5 18 83.6 20.5 83.5C24 83.3 26 82 27.7 80.5C31 77 32.5 75 33.1 72.1C34.5 67 35 63 34.9 60C34.8 54 34 50 32.5 46.8C31 44 29.5 42.6 27.7 42C25.5 41.5 24 41.3 22 41.5" stroke="#e41212" stroke-width="2.8" fill="none" stroke-linecap="round"/><path d="M209.8 183.5C195 185 180 188 165.5 190.6L164.5 191.8C157 191.8 150 191.8 143.3 191.9C137 192.5 132 194 128.5 196.5C124 199.5 121 203 119.2 207.6C117 213 116.3 218 116.5 222.4C116.8 229 118.5 234 121.1 239C123.5 244.5 127 249 130.3 252C134 255.5 138 257.8 143.3 259.3C153 262 164 262.8 174.7 263C190 263.8 200 264 218.5 263.8C232 263.6 242 263.3 251.7 262.9C262 262.2 270 261.5 277.5 260.1C285 258.5 290 256.5 294.1 253.7C300 249 302.5 244 304.3 238.9C306 233 306.4 225 306.1 218.6C305.6 211 303.5 206 299.7 202C295 196.5 290 193.5 283 190.9C276 188 268 186 259 184.5C250 183.2 240 182.6 227.7 182.6C220 182.8 215 183 209.8 183.5" stroke="#e41212" stroke-width="2.8" fill="none" stroke-linecap="round"/><path d="M28 332.2C24 333.2 22 334.5 23.5 333.8C32 331.5 40 331.5 47 332C57 332.8 66 335 73 339.5C80 344 83.8 349.5 84 356C84.2 363 81 369 75 374C67 379.5 57 382 46 382.4C35 382.6 24 380 16 375.5C8 371 4 365 3.6 358.5C3.4 352 6 347 10.5 343C16 338.5 21 336.8 25 336" stroke="#e41212" stroke-width="2.8" fill="none" stroke-linecap="round"/></svg>
<div class="a" style="left:114.5px;top:468px;width:42.4px;height:9.8px;border-radius:1px;background:#474747;border:0.5px solid #5a5a5a"></div>
<svg class="a" style="left:116.6px;top:472px" width="6" height="4.5" viewBox="0 0 6 4.5"><path d="M0.4 2.6Q3 -0.6 5.6 2.6Z" fill="#d8d8d8"/><path d="M0.4 3.7H5.6" stroke="#d0d0d0" stroke-width="0.7"/></svg>
<div class="t" style="left:125.3px;top:469.83px;font-size:6.16px;color:#f0f0f0;transform:scaleX(0.91);transform-origin:0 0">Find window</div>
<div class="t" style="left:467px;top:472.03px;font-size:6.11px;color:#e4e4e4;transform:scaleX(0.91);transform-origin:0 0">OnlineConfig disconnected</div>
<div class="a" style="left:0;top:479px;width:886px;height:19px;background:#3d3d3d"></div>
<div class="a" style="left:25px;top:496.6px;width:19.0px;height:1.4px;background:#8ac0ea"></div><div class="a" style="left:48px;top:496.6px;width:18.4px;height:1.4px;background:#8ac0ea"></div><div class="a" style="left:93.5px;top:496.6px;width:18.3px;height:1.4px;background:#f01a30"></div><div class="a" style="left:115.6px;top:496.6px;width:20.7px;height:1.4px;background:#8ac0ea"></div><div class="a" style="left:138.6px;top:496.6px;width:20.2px;height:1.4px;background:#8ac0ea"></div><div class="a" style="left:159.2px;top:496.6px;width:22.2px;height:1.4px;background:#8ac0ea"></div><div class="a" style="left:183.7px;top:496.6px;width:19.3px;height:1.4px;background:#8ac0ea"></div><div class="a" style="left:205.8px;top:496.6px;width:19.2px;height:1.4px;background:#8ac0ea"></div><div class="a" style="left:227.9px;top:496.6px;width:19.1px;height:1.4px;background:#8ac0ea"></div><div class="a" style="left:250px;top:496.6px;width:20.0px;height:1.4px;background:#8ac0ea"></div><div class="a" style="left:273px;top:496.6px;width:19.8px;height:1.4px;background:#8ac0ea"></div><div class="a" style="left:93.5px;top:479.4px;width:18.3px;height:17.2px;background:#a82a36"></div><div class="a" style="left:159.2px;top:479.4px;width:22.2px;height:17.4px;background:#595959"></div><svg class="a" style="left:6.8px;top:484.6px" width="8.4" height="8.6" viewBox="0 0 8.4 8.6"><path d="M0 1.2L3.6 0.7V4H0ZM4.1 0.6L8.4 0V4H4.1ZM0 4.5H3.6V7.9L0 7.4ZM4.1 4.5H8.4V8.6L4.1 8Z" fill="#f0f0f0"/></svg><svg class="a" style="left:29px;top:484px" width="11" height="9.5" viewBox="0 0 11 9.5"><rect x="4" y="1" width="7" height="7.5" fill="#3a9ae8"/><rect x="5" y="2" width="5" height="4" fill="#d8ecfa"/><rect x="0" y="1.8" width="6.2" height="6.2" fill="#0a64c0"/><circle cx="3.1" cy="4.9" r="1.6" fill="none" stroke="#fff" stroke-width="0.9"/></svg><svg class="a" style="left:52px;top:484.2px" width="10.5" height="9" viewBox="0 0 10.5 9"><path d="M0 0.5H4L5 1.5H10.5V9H0Z" fill="#e8b830"/><rect x="0" y="2.8" width="10.5" height="6.2" fill="#f8d048"/><rect x="2.8" y="5.6" width="5" height="2.6" fill="#2a7ad0"/></svg><svg class="a" style="left:73.8px;top:483.5px" width="11.6" height="10.5" viewBox="0 0 11.6 10.5"><path d="M8.6 0.3L11.3 1.5V9L8.6 10.2L3.2 5.4L1.2 7L0.3 6.5V4L1.2 3.5L3.2 5.1ZM8.6 3L5.4 5.25L8.6 7.5Z" fill="#2a90e0"/></svg><svg class="a" style="left:97px;top:483px" width="11" height="11" viewBox="0 0 11 11"><ellipse cx="5.5" cy="5.5" rx="4.6" ry="4.8" fill="none" stroke="#f02a3a" stroke-width="1.5"/><ellipse cx="5.5" cy="5.5" rx="1.8" ry="3.6" fill="none" stroke="#f02a3a" stroke-width="1"/></svg><svg class="a" style="left:119px;top:483.5px" width="12" height="11" viewBox="0 0 12 11"><circle cx="7.5" cy="2" r="1.6" fill="#7a7ad8"/><rect x="5.5" y="3.5" width="5" height="5" rx="1.5" fill="#6a6ad0"/><rect x="0.5" y="2.5" width="6" height="6" fill="#4a4aa8"/><path d="M2 4H5M3.5 4V7.5" stroke="#fff" stroke-width="0.9"/><circle cx="9" cy="8.2" r="2.5" fill="#d83030"/></svg><svg class="a" style="left:143.5px;top:483px" width="10" height="11.5" viewBox="0 0 10 11.5"><path d="M5.2 0.3C9 1.6 9.4 5.2 6.2 8.2C7.2 5.4 7 2.8 5.2 0.3Z" fill="#22c83a"/><path d="M4.6 3.4C0.2 5 -0.2 9.2 4.8 11.3C3.6 9.2 3.6 6 4.6 3.4Z" fill="#f2f2f2"/></svg><svg class="a" style="left:166px;top:483px" width="10" height="11.5" viewBox="0 0 10 11.5"><path d="M5.2 0.3C9 1.6 9.4 5.2 6.2 8.2C7.2 5.4 7 2.8 5.2 0.3Z" fill="#22c83a"/><path d="M4.6 3.4C0.2 5 -0.2 9.2 4.8 11.3C3.6 9.2 3.6 6 4.6 3.4Z" fill="#f2f2f2"/></svg><svg class="a" style="left:187.5px;top:484px" width="11" height="9.5" viewBox="0 0 11 9.5"><rect x="4" y="0.5" width="6.5" height="8.5" fill="#e8eef8"/><path d="M5 2.5H10M5 4.5H10M5 6.5H10" stroke="#2a5aa8" stroke-width="0.7"/><rect x="0" y="1.5" width="6" height="6.5" fill="#2a5aa8"/><path d="M1 3L2 6.5L3 4L4 6.5L5 3" stroke="#fff" stroke-width="0.6" fill="none"/></svg><svg class="a" style="left:209.5px;top:483.5px" width="10" height="10.5" viewBox="0 0 10 10.5"><path d="M0.5 0.5L5 5L3 10Z" fill="#2a8ae0"/><path d="M9.5 2L5 5L7 9Z" fill="#3a9af0"/><path d="M3 6L5 5L5.5 8Z" fill="#f0c020"/></svg><svg class="a" style="left:232.5px;top:483px" width="10" height="11" viewBox="0 0 10 11"><circle cx="5" cy="4.5" r="3.6" fill="none" stroke="#d83a2a" stroke-width="1.2"/><path d="M5 0.5V10.5M3 6L7 9" stroke="#3a7ad8" stroke-width="1.2"/></svg><svg class="a" style="left:255.5px;top:483.5px" width="10" height="10" viewBox="0 0 10 10"><path d="M2 0.5H9.5L8 9.5H0.5Z" fill="#b8dce8"/><path d="M3 3H8M2.6 5H7.6M2.3 7H7.3" stroke="#7aa8b8" stroke-width="0.5"/></svg><svg class="a" style="left:277.5px;top:483px" width="10" height="11" viewBox="0 0 10 11"><rect x="0.5" y="1.5" width="8" height="8" fill="#b8c0c8"/><ellipse cx="4.5" cy="1.8" rx="4" ry="1.4" fill="#e8ecf0"/><ellipse cx="4.5" cy="5" rx="4" ry="1.2" fill="#d0d8e0"/><circle cx="7.5" cy="8.5" r="2" fill="#d8d8d8" stroke="#666" stroke-width="0.5"/></svg>
<div class="t" style="left:864px;top:481.04px;font-size:5.94px;color:#e8e8e8;transform:scaleX(0.91);transform-origin:0 0">16:48</div>
<div class="t" style="left:857px;top:489.54px;font-size:5.94px;color:#e8e8e8;transform:scaleX(0.91);transform-origin:0 0">16/10/2025</div>
</body></html>
